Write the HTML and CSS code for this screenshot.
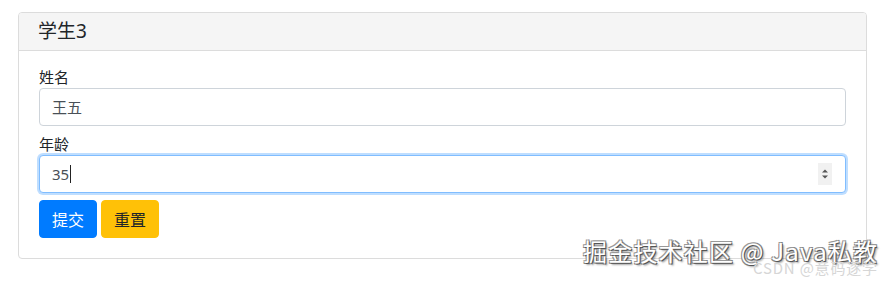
FILE: index.html
```html
<!DOCTYPE html>
<html lang="zh-CN">
<head>
<meta charset="utf-8">
<title>学生3</title>
<link rel="stylesheet" href="styles.css">
</head>
<body>
<div class="page">
  <div class="card">
    <div class="card-header">学生3</div>
    <div class="card-body">
      <div class="form-group">
        <label class="label">姓名</label>
        <div class="form-control"><span class="value">王五</span></div>
      </div>
      <div class="form-group">
        <label class="label">年龄</label>
        <div class="form-control focused">
          <span class="value">35</span><span class="caret"></span>
          <span class="spacer"></span>
          <span class="spin">
            <svg width="8" height="12" viewBox="0 0 8 12"><path d="M1 4.5 L4 1.5 L7 4.5 Z" fill="#555"/><path d="M1 7.5 L4 10.5 L7 7.5 Z" fill="#555"/></svg>
          </span>
        </div>
      </div>
      <div class="actions">
        <button class="btn btn-primary">提交</button>
        <button class="btn btn-warning">重置</button>
      </div>
    </div>
  </div>
  <div class="wm-juejin">掘金技术社区 @ Java私教</div>
  <div class="wm-csdn">CSDN @意码逐学</div>
</div>
</body>
</html>
```

FILE: styles.css
```css
html, body {
  margin: 0;
  padding: 0;
  background: #fff;
}
body {
  font-family: "Noto Sans", "Noto Sans CJK SC", sans-serif;
  color: #212529;
  font-size: 16px;
}
.page {
  position: relative;
  width: 886px;
  height: 281px;
  padding: 12px 19px 0 18px;
  box-sizing: border-box;
  overflow: hidden;
}
.card {
  border: 1px solid #dcdcdc;
  border-radius: 4px;
  background: #fff;
}
.card-header {
  height: 37px;
  line-height: 37px;
  padding: 0 19px;
  font-size: 19px;
  background: #f5f5f5;
  border-bottom: 1px solid #dcdcdc;
  border-radius: 3px 3px 0 0;
  color: #212529;
}
.card-body {
  padding: 15px 20px 20px;
}
.form-group {
  margin-bottom: 7px;
}
.label {
  display: block;
  font-size: 15px;
  line-height: 22px;
  color: #212529;
}
.form-control {
  display: flex;
  align-items: center;
  height: 38px;
  box-sizing: border-box;
  padding: 0 13px 0 12px;
  border: 1px solid #ced4da;
  border-radius: 4px;
  font-size: 15px;
  color: #495057;
  background: #fff;
}
.form-control.focused {
  border-color: #80bdff;
  box-shadow: 0 0 0 2px rgba(0, 123, 255, 0.25);
}
.value {
  line-height: 20px;
}
.caret {
  display: inline-block;
  width: 1px;
  height: 18px;
  background: #222;
  margin-left: 1px;
}
.spacer {
  flex: 1;
}
.spin {
  display: flex;
  align-items: center;
  justify-content: center;
  width: 14px;
  height: 22px;
  background: #f1f1f1;
}
.actions {
  display: flex;
  gap: 4px;
}
.btn {
  height: 38px;
  padding: 0 12px;
  border: 1px solid transparent;
  border-radius: 4px;
  font-family: "Noto Sans CJK SC", sans-serif;
  font-size: 16px;
  line-height: 36px;
  cursor: pointer;
}
.btn-primary {
  background: #007bff;
  border-color: #007bff;
  color: #fff;
}
.btn-warning {
  background: #ffc107;
  border-color: #ffc107;
  color: #212529;
}
.wm-juejin {
  position: absolute;
  left: 583px;
  top: 234px;
  font-family: "Noto Sans CJK SC", sans-serif;
  font-size: 24px;
  line-height: 34px;
  color: #fff;
  letter-spacing: 1.2px;
  text-shadow: 1px 1px 0 #555, -1px -1px 0 #999, 1px -1px 0 #888, -1px 1px 0 #888, 2px 2px 2px rgba(0,0,0,0.4);
  white-space: nowrap;
}
.wm-csdn {
  position: absolute;
  left: 753px;
  top: 258px;
  font-family: "Noto Sans CJK SC", sans-serif;
  font-size: 15px;
  line-height: 20px;
  letter-spacing: 0.8px;
  color: #d6d6d6;
  white-space: nowrap;
}
```
